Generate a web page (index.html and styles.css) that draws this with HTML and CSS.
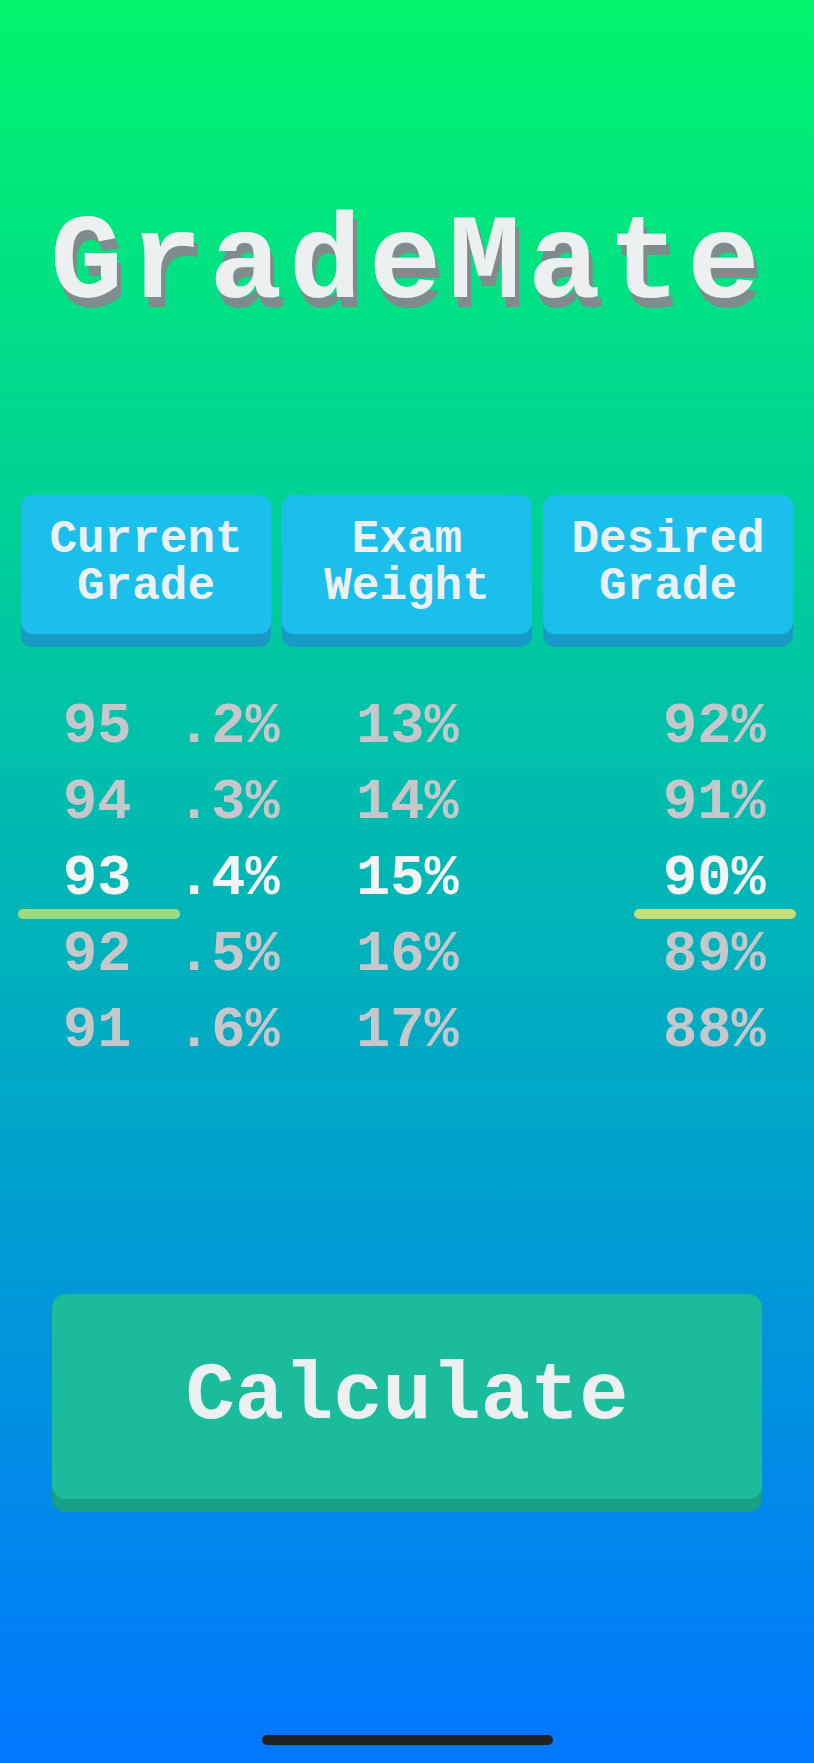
FILE: index.html
```html
<!DOCTYPE html>
<html lang="en">
<head>
<meta charset="utf-8">
<title>GradeMate</title>
<link rel="stylesheet" href="styles.css">
</head>
<body>
<main class="app">
  <h1 class="title">GradeMate</h1>

  <div class="headers">
    <div class="header-btn">Current<br>Grade</div>
    <div class="header-btn">Exam<br>Weight</div>
    <div class="header-btn">Desired<br>Grade</div>
  </div>

  <div class="picker">
    <div class="wheel">
      <div class="item">95</div>
      <div class="item">94</div>
      <div class="item selected">93</div>
      <div class="item">92</div>
      <div class="item">91</div>
    </div>
    <div class="wheel">
      <div class="item">.2%</div>
      <div class="item">.3%</div>
      <div class="item selected">.4%</div>
      <div class="item">.5%</div>
      <div class="item">.6%</div>
    </div>
    <div class="wheel">
      <div class="item">13%</div>
      <div class="item">14%</div>
      <div class="item selected">15%</div>
      <div class="item">16%</div>
      <div class="item">17%</div>
    </div>
    <div class="wheel">
      <div class="item">92%</div>
      <div class="item">91%</div>
      <div class="item selected">90%</div>
      <div class="item">89%</div>
      <div class="item">88%</div>
    </div>
    <span class="marker marker-left"></span>
    <span class="marker marker-right"></span>
  </div>

  <button class="calc-btn" type="button">Calculate</button>

  <div class="home-indicator"></div>
</main>
</body>
</html>
```

FILE: styles.css
```css
html, body {
  margin: 0;
  padding: 0;
}

body {
  width: 814px;
  height: 1763px;
  overflow: hidden;
  background: linear-gradient(180deg, #00f66c 0%, #0077ff 100%);
  font-family: "Liberation Mono", "Courier New", monospace;
  font-weight: bold;
  color: #ecf0f1;
}

.app {
  display: flex;
  flex-direction: column;
  height: 1763px;
}

.title {
  margin: 190px 0 0 0;
  height: 150px;
  font-size: 121px;
  line-height: 150px;
  font-weight: bold;
  text-align: center;
  color: #ecf0f1;
  text-shadow: 4px 10px 0 #7f8c8d;
  letter-spacing: 7px;
  padding-left: 3px;
}

.headers {
  display: flex;
  gap: 11px;
  padding: 0 21px;
  margin-top: 155px;
}

.header-btn {
  flex: 1;
  height: 139px;
  display: flex;
  align-items: center;
  justify-content: center;
  text-align: center;
  background: #1bbfec;
  border-radius: 12px;
  box-shadow: 0 13px 0 #1899c6;
  font-size: 46px;
  line-height: 47px;
  color: #ecf0f1;
  padding-bottom: 2px;
  box-sizing: border-box;
}

.picker {
  position: relative;
  display: grid;
  grid-template-columns: 114px 179px 307px auto;
  padding-left: 63px;
  margin-top: 55px;
}

.wheel {
  display: flex;
  flex-direction: column;
}

.item {
  height: 76px;
  line-height: 76px;
  font-size: 57px;
  color: #c5c7cb;
  white-space: nowrap;
}

.item.selected {
  color: #f3f5f5;
}

.marker {
  position: absolute;
  top: 220px;
  width: 162px;
  height: 10px;
  border-radius: 5px;
}

.marker-left {
  left: 18px;
  background: #9bda7d;
}

.marker-right {
  left: 634px;
  background: #c5de78;
}

.calc-btn {
  display: block;
  margin: 225px 52px 0 52px;
  height: 205px;
  border: none;
  border-radius: 14px;
  background: #1abc9c;
  box-shadow: 0 13px 0 #17a085;
  font-family: "Liberation Mono", "Courier New", monospace;
  font-weight: bold;
  font-size: 82px;
  color: #ecf0f1;
  padding: 0;
  cursor: pointer;
}

.home-indicator {
  margin: auto auto 18px auto;
  width: 291px;
  height: 10px;
  border-radius: 5px;
  background: #222222;
}
```
